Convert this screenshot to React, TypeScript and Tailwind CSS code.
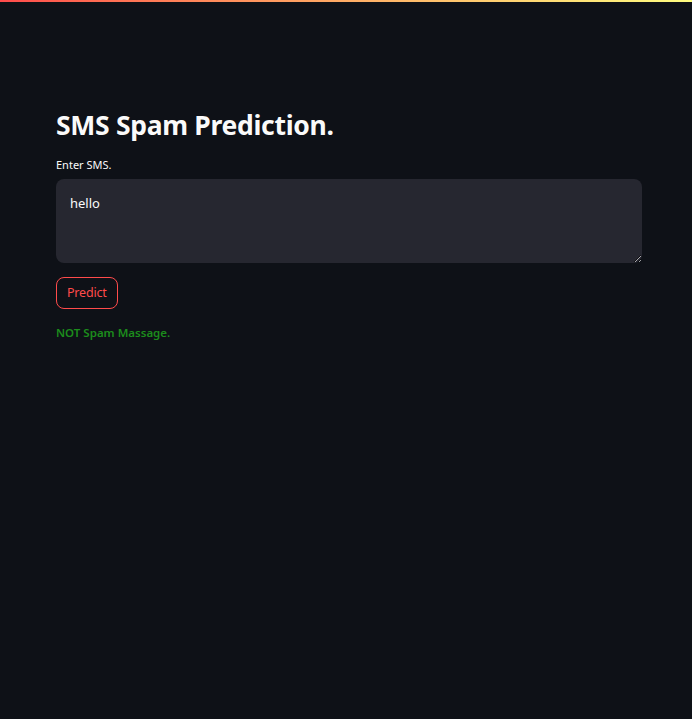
export default function App() {
  return (
    <div className="min-h-[719px] w-full bg-[#0e1117] font-['Noto_Sans',sans-serif] text-[#fafafa]">
      <div className="h-[2px] w-full bg-gradient-to-r from-[#ff4b4b] to-[#fffd80]" />
      <main className="pl-[56px] pr-[50px] pt-[103px]">
        <h1 className="m-0 text-[26.5px] font-bold leading-[40px] tracking-[-0.3px]">SMS Spam Prediction.</h1>
        <label className="mt-[12px] block text-[11px] leading-[16px]">Enter SMS.</label>
        <textarea
          defaultValue="hello"
          className="mt-[6px] block h-[84px] w-full resize-y rounded-[8px] bg-[#262730] px-[14px] py-[14px] text-[13px] leading-[20px] text-[#fafafa] outline-none"
        />
        <button className="mt-[14px] rounded-[8px] border border-[#ff4b4b] px-[10px] py-[6px] text-[12.5px] leading-[18px] tracking-[-0.2px] text-[#ff4b4b]">
          Predict
        </button>
        <p className="mt-[16px] text-[11.5px] font-semibold leading-[16px] text-[#1c8c1c]">NOT Spam Massage.</p>
      </main>
    </div>
  );
}
